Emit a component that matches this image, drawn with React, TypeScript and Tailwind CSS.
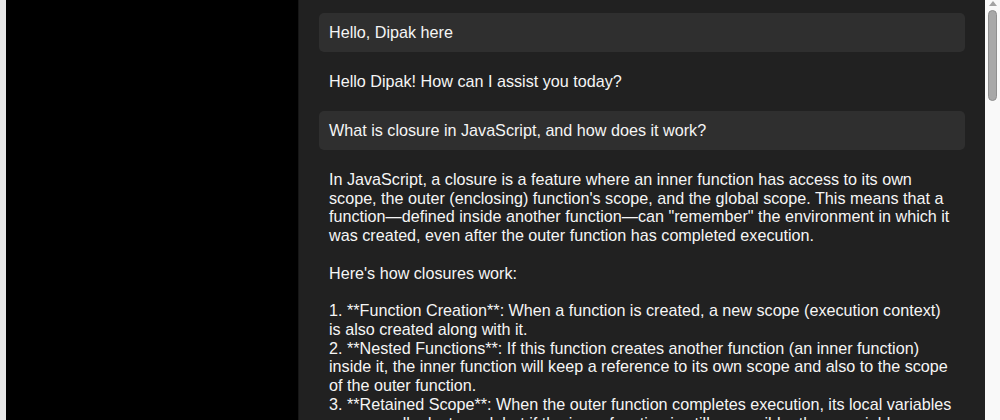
import React from "react";

const font = { fontFamily: '"Liberation Sans", Arial, sans-serif' };

function UserMsg({ children }: { children: React.ReactNode }) {
  return (
    <div className="rounded-[5px] bg-[#2f2f2f] px-[10px] py-[10px] text-[16.17px] leading-[19px] text-[#f5f5f5]">
      {children}
    </div>
  );
}

function BotMsg({ children }: { children: React.ReactNode }) {
  return (
    <div className="whitespace-pre-wrap py-[10px] pl-[10px] pr-[11px] text-[16.17px] leading-[18.75px] text-[#f5f5f5]">
      {children}
    </div>
  );
}

const answer = `In JavaScript, a closure is a feature where an inner function has access to its own scope, the outer (enclosing) function's scope, and the global scope. This means that a function\u2014defined inside another function\u2014can "remember" the environment in which it was created, even after the outer function has completed execution.

Here's how closures work:

1. **Function Creation**: When a function is created, a new scope (execution context) is also created along with it.
2. **Nested Functions**: If this function creates another function (an inner function) inside it, the inner function will keep a reference to its own scope and also to the scope of the outer function.
3. **Retained Scope**: When the outer function completes execution, its local variables are normally destroyed, but if the inner function is still accessible, those variables are retained.`;

export default function App() {
  return (
    <div className="flex h-[420px] w-[1000px] overflow-hidden bg-[#212121]" style={font}>
      <div className="w-[6px] shrink-0 bg-[#e8e8e8]" />
      <div className="w-[292px] shrink-0 bg-black" />
      <div className="w-[1px] shrink-0 bg-[#161616]" />
      <div className="flex min-w-0 flex-1 flex-col gap-[10px] overflow-hidden pl-[20px] pr-[20px] pt-[13px]">
        <UserMsg>Hello, Dipak here</UserMsg>
        <BotMsg>Hello Dipak! How can I assist you today?</BotMsg>
        <UserMsg>What is closure in JavaScript, and how does it work?</UserMsg>
        <BotMsg>{answer}</BotMsg>
      </div>
      <div className="flex w-[15px] shrink-0 flex-col items-center bg-[#f9f9f9]">
        <svg width="8" height="5" viewBox="0 0 8 5" className="mt-[1px]">
          <polygon points="4,0 8,5 0,5" fill="#a3a3a3" />
        </svg>
        <div className="mt-[4px] h-[91px] w-[9px] rounded-[5px] border border-[#8f8f8f] bg-[#a8a8a8]" />
      </div>
    </div>
  );
}
